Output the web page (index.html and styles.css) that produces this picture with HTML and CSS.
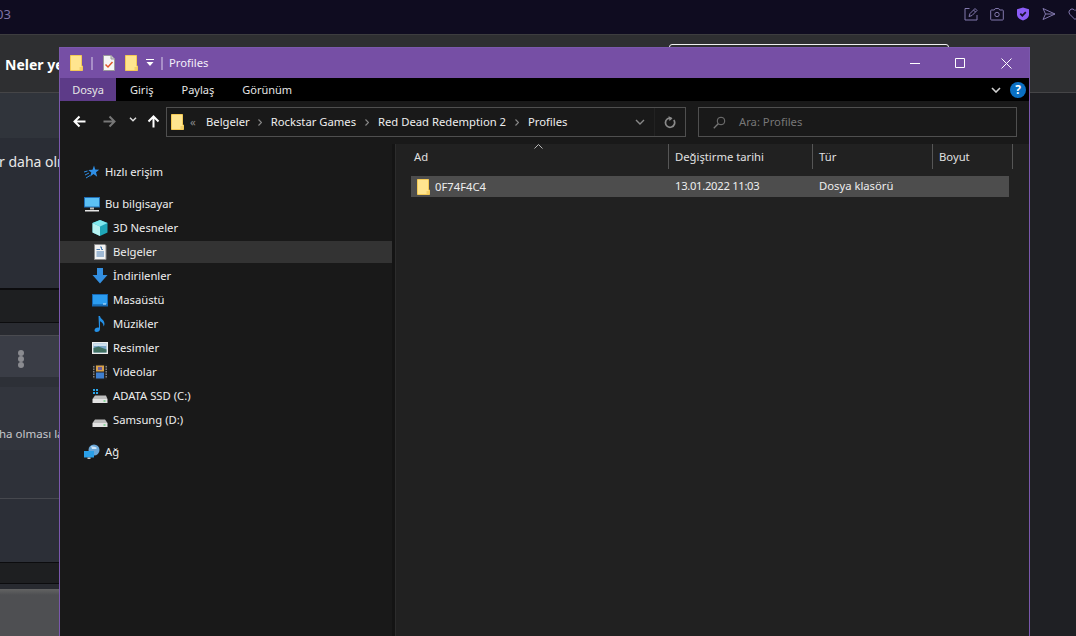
FILE: index.html
```html
<!DOCTYPE html>
<html lang="tr">
<head>
<meta charset="utf-8">
<title>Profiles</title>
<link rel="stylesheet" href="styles.css">
</head>
<body>
<svg class="defs" width="0" height="0" aria-hidden="true">
  <symbol id="folder" viewBox="0 0 13 16">
    <path d="M.5.5h11v10.500h1v4.500H.5z" fill="#ffe58f" stroke="#f4ca55"/>
    <path d="M9.500 12h2.500v3H9.500z" fill="#f4d06a"/>
  </symbol>
</svg>

<div class="site">
  <header class="topbar">
    <span class="topnum">03</span>
    <div class="topicons">
      <svg class="ti" viewBox="0 0 14 14"><path d="M5.500 1.500H1v11.500h12V8M5 9.500l1-3L11 1.500l2 2-5 5zM9.500 3l2 2" fill="none" stroke="#8278ad"/></svg>
      <svg class="ti" viewBox="0 0 14 14"><path d="M1.500 3h2.800l1-1.500h3.400l1 1.500h2.800a.8.8 0 0 1 .8.800v8.400a.8.8 0 0 1-.8.800h-11a.8.8 0 0 1-.8-.800V3.800a.8.8 0 0 1 .8-.800z" fill="none" stroke="#8278ad"/><circle cx="7" cy="7.500" r="2.200" fill="none" stroke="#8278ad"/></svg>
      <svg class="ti" viewBox="0 0 14 14"><path d="M7 .5l6 1.800v5.200c0 3-2.800 5-6 6-3.200-1-6-3-6-6V2.300z" fill="#8b5cf6"/><path d="M4.300 6.700l2 2 3.500-3.500" fill="none" stroke="#17122e" stroke-width="1.700"/></svg>
      <svg class="ti" viewBox="0 0 14 14"><path d="M1 1.500l12 5.500-12 5.500 2.500-5.500zM3.500 7H13" fill="none" stroke="#8278ad"/></svg>
      <svg class="ti" viewBox="0 0 14 14"><path d="M7 12.500L1.700 7.200a3.200 3.200 0 0 1 4.500-4.500l.8.800.8-.8a3.200 3.200 0 0 1 4.500 4.500z" fill="none" stroke="#8278ad"/></svg>
    </div>
  </header>
  <div class="pagehead">
    <strong class="pagetitle">Neler yeni</strong>
    <div class="searchfield"></div>
  </div>
  <div class="feed">
    <div class="band b1"></div>
    <div class="band b2"><span class="feedtext">r daha olması</span></div>
    <div class="band b3"></div>
    <div class="band b4"></div>
    <div class="band b5"><span class="kebab"><i></i><i></i><i></i></span></div>
    <div class="band b6"></div>
    <div class="band b7"><span class="feedtext small">ha olması lazım</span></div>
    <div class="band b8"></div>
    <div class="band b9"></div>
    <div class="band b3 b10"></div>
    <div class="band b11"></div>
    <div class="band b12"></div>
  </div>
</div>

<section class="win">
  <div class="titlebar">
    <svg class="fo"><use href="#folder"/></svg>
    <i class="qsep s1"></i>
    <svg class="qdoc" viewBox="0 0 12 16"><path d="M.5.5h7.500l3.500 3.500v11.500H.5z" fill="#f5f5f5" stroke="#9a9a9a"/><path d="M8 .5V4h3.500" fill="#ccc" stroke="#9a9a9a"/><path d="M2.500 9.500l2.500 2.500 4.500-5" fill="none" stroke="#e0562c" stroke-width="1.500"/></svg>
    <svg class="fo q3"><use href="#folder"/></svg>
    <svg class="qdrop" viewBox="0 0 8 8"><path d="M0 .5h8" stroke="#fff"/><path d="M.5 3h7L4 7z" fill="#fff"/></svg>
    <i class="qsep s2"></i>
    <span class="wintitle">Profiles</span>
    <div class="controls">
      <svg class="wc c1" viewBox="0 0 11 11"><path d="M0 5.500h10" stroke="#fff"/></svg>
      <svg class="wc c2" viewBox="0 0 11 11"><path d="M.5.5h9v9h-9z" fill="none" stroke="#fff"/></svg>
      <svg class="wc c3" viewBox="0 0 11 11"><path d="M.5.500l10 10M10.500.500l-10 10" fill="none" stroke="#fff"/></svg>
    </div>
  </div>
  <div class="ribbon">
    <span class="tab active">Dosya</span>
    <span class="tab giris">Giriş</span>
    <span class="tab paylas">Paylaş</span>
    <span class="tab gorunum">Görünüm</span>
    <svg class="collapse" viewBox="0 0 10 6"><path d="M1 1l4 4 4-4" fill="none" stroke="#d0d0d0" stroke-width="1.600"/></svg>
    <span class="help">?</span>
  </div>
  <div class="toolbar">
    <svg class="nb back" viewBox="0 0 13 13"><path d="M12.500 6.500H1.500M6.500 1.500l-5 5 5 5" fill="none" stroke="#fff" stroke-width="2"/></svg>
    <svg class="nb fwd" viewBox="0 0 13 13"><path d="M.5 6.500h11M6.500 1.500l5 5-5 5" fill="none" stroke="#777" stroke-width="2"/></svg>
    <svg class="drop" viewBox="0 0 8 5"><path d="M1 .8l3 3 3-3" fill="none" stroke="#ddd" stroke-width="1.500"/></svg>
    <svg class="nb up" viewBox="0 0 13 13"><path d="M6.500 12.500v-11M1.500 6.500l5-5 5 5" fill="none" stroke="#fff" stroke-width="2"/></svg>
    <div class="address">
      <svg class="fo"><use href="#folder"/></svg>
      <span class="more">«</span>
      <span class="crumb">Belgeler</span><svg class="gt" viewBox="0 0 4 7"><path d="M.5.5l3 3-3 3" fill="none" stroke="#888" stroke-width="1.200"/></svg>
      <span class="crumb">Rockstar Games</span><svg class="gt" viewBox="0 0 4 7"><path d="M.5.5l3 3-3 3" fill="none" stroke="#888" stroke-width="1.200"/></svg>
      <span class="crumb">Red Dead Redemption 2</span><svg class="gt" viewBox="0 0 4 7"><path d="M.5.5l3 3-3 3" fill="none" stroke="#888" stroke-width="1.200"/></svg>
      <span class="crumb">Profiles</span>
      <svg class="adrop" viewBox="0 0 10 6"><path d="M1 1l4 4 4-4" fill="none" stroke="#888" stroke-width="1.400"/></svg>
      <i class="asep"></i>
      <svg class="refresh" viewBox="0 0 12 13"><path d="M9.800 4a4.600 4.600 0 1 1-2.300-1.700" fill="none" stroke="#8a8a8a" stroke-width="1.700"/><path d="M4.500 0l4 2.400-3 2.600z" fill="#8a8a8a"/></svg>
    </div>
    <div class="search">
      <svg class="mag" viewBox="0 0 13 13"><circle cx="8" cy="5" r="3.800" fill="none" stroke="#777"/><path d="M5.200 7.800L.8 12.200" stroke="#777" stroke-width="1.300"/></svg>
      <span>Ara: Profiles</span>
    </div>
  </div>
  <div class="main">
    <nav class="nav">
      <div class="navrow head">
        <svg class="ic" viewBox="0 0 16 16"><path d="M10 1.500l1.200 4 4 .2-3.200 2.600 1.200 4.400-3.700-2.600L6 12.700l1.300-4.300L4.300 6l4.200-.2z" fill="#2f8fe6"/><path d="M1 11l4-2M2 14l4-2.500M0 8l3.500-1" stroke="#2f8fe6"/></svg>
        <span>Hızlı erişim</span>
      </div>
      <div class="navrow head gap">
        <svg class="ic" viewBox="0 0 16 16"><path d="M0 1h16v10.500H0z" fill="#1f6fb8"/><path d="M1 2h14v8.500H1z" fill="#5cc0f5"/><path d="M6 11.500h4v2H6z" fill="#bbb"/><path d="M1 14h14v1.500H1z" fill="#e4e4e4"/></svg>
        <span>Bu bilgisayar</span>
      </div>
      <div class="navrow">
        <svg class="ic" viewBox="0 0 16 16"><path d="M8 0l7.500 3v9.500L8 16 .5 12.500V3z" fill="#1fa6b8"/><path d="M8 0l7.500 3L8 6.500.5 3z" fill="#7fe8ee"/><path d="M.5 3L8 6.500V16L.5 12.500z" fill="#b6f2f2"/></svg>
        <span>3D Nesneler</span>
      </div>
      <div class="navrow sel">
        <svg class="ic" viewBox="0 0 16 16"><path d="M2.500.5H13l1 1v14H2.500z" fill="#f2f2f2" stroke="#8a8a8a"/><path d="M8 3h1.500v2.500H11M4.500 5.500H8M4.500 8h7.500M4.500 10h7.500M4.500 12h7.500" fill="none" stroke="#4a7fb5"/></svg>
        <span>Belgeler</span>
      </div>
      <div class="navrow">
        <svg class="ic" viewBox="0 0 16 16"><path d="M5 0h6v7h4.500L8 15.500.5 7H5z" fill="#338fe0"/></svg>
        <span>İndirilenler</span>
      </div>
      <div class="navrow">
        <svg class="ic" viewBox="0 0 16 16"><path d="M0 2h16v12.500H0z" fill="#1668b4"/><path d="M1 3h14v10.500H1z" fill="#2b9cf0"/><path d="M1 12.500h14v1H1z" fill="#0c4f8f"/><path d="M11 11.500h3v1h-3z" fill="#cfeaff"/></svg>
        <span>Masaüstü</span>
      </div>
      <div class="navrow">
        <svg class="ic" viewBox="0 0 16 16"><path d="M6.500 0H8c.3 3 4.500 3.500 4.500 8 0 1-.4 1.800-1 2.500.3-3-2-4.500-3.500-5.300V13c0 1.800-1.500 3-3.500 3-1.300 0-2-.7-2-1.700 0-1.500 1.500-2.800 3.500-2.800.5 0 .8 0 1 .2z" fill="#2490e6"/></svg>
        <span>Müzikler</span>
      </div>
      <div class="navrow">
        <svg class="ic" viewBox="0 0 16 16"><path d="M0 2h16v12H0z" fill="#eee"/><path d="M1.500 3.500h13v9h-13z" fill="#7ba7c9"/><path d="M1.500 8l5-1.500 8 3v3h-13z" fill="#3f6f60"/><path d="M1.500 3.500h13V6h-13z" fill="#cfe0ee"/></svg>
        <span>Resimler</span>
      </div>
      <div class="navrow">
        <svg class="ic" viewBox="0 0 16 16"><path d="M1 .5h14v15H1z" fill="#222"/><path d="M4 1.500h8v6H4z" fill="#d9a24a"/><path d="M4 8.500h8v6H4z" fill="#3f7fd0"/><path d="M1.800 2v12M14.200 2v12" stroke="#999" stroke-width="1.200" stroke-dasharray="1.500 1"/><path d="M6 3h4v3H6z" fill="#6c5f9a"/></svg>
        <span>Videolar</span>
      </div>
      <div class="navrow">
        <svg class="ic" viewBox="0 0 16 16"><path d="M1 1h2v2H1zM4 1h2v2H4zM1 4h2v2H1zM4 4h2v2H4z" fill="#2aa4e8"/><path d="M3 7.500h11L15.500 11H.500z" fill="#bcbcbc"/><path d="M.5 11h15v4H.5z" fill="#e2e2e2"/><path d="M11.500 12.500h2v1h-2z" fill="#35c759"/></svg>
        <span>ADATA SSD (C:)</span>
      </div>
      <div class="navrow">
        <svg class="ic" viewBox="0 0 16 16"><path d="M3 7.500h10L15.500 11H.500z" fill="#bcbcbc"/><path d="M.5 11h15v4H.5z" fill="#e2e2e2"/><path d="M11.500 12.500h2v1h-2z" fill="#35c759"/></svg>
        <span>Samsung (D:)</span>
      </div>
      <div class="navrow head gap">
        <svg class="ic" viewBox="0 0 16 16"><circle cx="10" cy="6" r="5.500" fill="#6aa7d8"/><path d="M7 2c2 1 5 .5 6 2-1 1.500-3 1-5 1z" fill="#cfe6f7"/><path d="M0 7h10v6.500H0z" fill="#2a9fe8"/><path d="M3.500 13.500h3V15h-3z" fill="#c8c8c8"/></svg>
        <span>Ağ</span>
      </div>
    </nav>
    <div class="gutter"></div>
    <div class="content">
      <div class="colhead">
        <svg class="caret" viewBox="0 0 9 5"><path d="M.5 4.500l4-4 4 4" fill="none" stroke="#b8b8b8"/></svg>
        <span class="hc">Ad</span>
        <span class="hc">Değiştirme tarihi</span>
        <span class="hc">Tür</span>
        <span class="hc">Boyut</span>
      </div>
      <div class="filerow">
        <span class="cell name"><svg class="fo"><use href="#folder"/></svg>0F74F4C4</span>
        <span class="cell date">13.01.2022 11:03</span>
        <span class="cell">Dosya klasörü</span>
        <span class="cell"></span>
      </div>
    </div>
  </div>
</section>
</body>
</html>
```
FILE: styles.css
```css
* { box-sizing: border-box; }
html, body { margin: 0; height: 100%; overflow: hidden; background: #1f2024; }
body { font-family: "Noto Sans", "Open Sans", sans-serif; font-size: 11.25px; color: #eee; }
.defs { position: absolute; }
i { display: block; font-style: normal; }
svg { display: block; flex: none; }

/* page behind the window */
.site { height: 636px; display: flex; flex-direction: column; }
.topbar { height: 34px; background: #0f0c20; display: flex; align-items: center; justify-content: space-between; color: #7f74a8; flex: none; padding-bottom: 6px; }
.topnum { margin-left: -4px; font-size: 13px; }
.topicons { display: flex; gap: 12px; margin-right: -6px; align-items: center; }
.ti { width: 14px; height: 14px; }
.pagehead { height: 59px; flex: none; background: #2e2f31; border-top: 1px solid #3d3d3f; border-bottom: 1px solid #454547; display: flex; align-items: flex-start; }
.pagetitle { font-size: 14px; color: #fff; margin: 20px 0 0 5px; width: 664px; font-weight: 700; }
.searchfield { width: 280px; height: 30px; margin-top: 9px; border: 1px solid #f0f0f0; border-radius: 3px; }
.feed { width: 400px; flex: 1; display: flex; flex-direction: column; }
.band { flex: none; display: flex; align-items: center; overflow: hidden; white-space: nowrap; }
.b1 { height: 45px; background: #30343b; }
.b2 { height: 152px; background: #2a2d35; border-bottom: 2px solid #0c0c0e; align-items: flex-start; }
.b3 { height: 33px; background: #1e1f21; border-bottom: 1px solid #0c0c0e; }
.b4 { height: 13px; background: #292b31; border-bottom: 1px solid #4a4b50; }
.b5 { height: 41px; background: #3a3d46; }
.b6 { height: 10px; background: #2d3037; }
.b7 { height: 63px; background: #32353d; align-items: flex-start; }
.b8 { height: 49px; background: #2e3139; border-bottom: 1px solid #46484e; }
.b9 { height: 64px; background: #2c2f37; border-bottom: 1px solid #0c0c0e; }
.b10 { height: 21px; }
.b11 { height: 5px; background: #282a30; }
.b12 { flex: 1; background: linear-gradient(#636363, #4e4f52 6px); }
.feedtext { font-size: 14px; color: #e8e8e8; margin: 14px 0 0 -1px; }
.feedtext.small { font-size: 11.5px; color: #c8c8cc; margin: 39px 0 0 -1px; }
.kebab { display: flex; flex-direction: column; margin: 4px 0 0 18px; }
.kebab i { width: 6px; height: 6px; border-radius: 50%; background: #8a8b90; }

/* explorer window */
.win { position: absolute; left: 59px; top: 47px; width: 971px; height: 589px; background: #191919; border: 1px solid #7b58ad; border-bottom: 0; display: flex; flex-direction: column; }
.titlebar { height: 30px; flex: none; background: #764fa5; display: flex; align-items: center; padding-left: 10px; }
.fo { width: 13px; height: 16px; }
.qsep { width: 2px; height: 13px; background: #a78fc8; }
.s1 { margin-left: 8px; }
.qdoc { width: 12px; height: 16px; margin-left: 10px; }
.q3 { margin-left: 10px; }
.qdrop { width: 8px; height: 8px; margin-left: 8px; }
.s2 { margin-left: 7px; }
.wintitle { margin: 0 0 2px 6px; color: #f4f0fa; }
.controls { margin-left: auto; display: flex; align-items: center; padding-right: 17px; }
.wc { width: 11px; height: 11px; }
.c2 { margin-left: 34px; }
.c3 { margin-left: 35px; }
.ribbon { height: 23px; flex: none; background: #000; display: flex; align-items: center; }
.tab { color: #e6e6e6; font-size: 11px; }
.tab.active { width: 56px; height: 23px; background: #5d3b88; display: flex; align-items: center; justify-content: center; }
.giris { margin-left: 14px; }
.paylas { margin-left: 28px; }
.gorunum { margin-left: 28px; }
.collapse { width: 10px; height: 6px; margin-left: auto; }
.help { width: 16px; height: 16px; border-radius: 50%; background: #0a6fc2; color: #fff; font-weight: 700; font-size: 12px; line-height: 16px; text-align: center; margin: 0 3px 0 9px; }
.toolbar { height: 43px; flex: none; background: #191919; display: flex; align-items: flex-start; padding: 6px 0 0 13px; }
.nb { width: 13px; height: 13px; margin-top: 8px; }
.fwd { margin-left: 17px; }
.drop { width: 8px; height: 5px; margin: 10px 0 0 13px; }
.up { margin-left: 10px; }
.address { width: 520px; height: 30px; margin-left: 6px; border: 1px solid #4f4f4f; display: flex; align-items: center; padding-left: 4px; color: #eee; }
.more { color: #888; margin: 0 0 2px 6px; width: 16px; }
.crumb { margin-bottom: 2px; }
.gt { width: 4px; height: 7px; margin: 0 9px; }
.more + .crumb + .gt { margin-left: 8px; }
.adrop { width: 10px; height: 6px; margin-left: auto; }
.asep { width: 1px; height: 28px; background: #222; margin-left: 9px; }
.refresh { width: 12px; height: 13px; margin: 0 9px 0 9px; }
.search { width: 319px; height: 30px; margin-left: 12px; border: 1px solid #4f4f4f; display: flex; align-items: center; padding-left: 14px; color: #777; }
.search span { margin-bottom: 2px; }
.mag { width: 13px; height: 13px; margin-right: 13px; }
.main { flex: 1; display: flex; min-height: 0; }
.nav { width: 332px; flex: none; padding-top: 17px; display: flex; flex-direction: column; gap: 2px; }
.navrow { height: 22px; display: flex; align-items: center; padding-left: 32px; flex: none; }
.navrow span { margin-bottom: 2px; }
.navrow.head { padding-left: 24px; }
.navrow.gap { margin-top: 8px; }
.navrow.sel { background: #333; }
.ic { width: 16px; height: 16px; margin-right: 5px; }
.gutter { width: 4px; flex: none; background: #141414; border-right: 1px solid #2c2c2c; }
.content { flex: 1; background: #212121; padding-left: 15px; }
.colhead { position: relative; display: grid; grid-template-columns: 258px 144px 120px 80px; height: 25px; width: 602px; }
.caret { position: absolute; left: 123px; top: 0; width: 9px; height: 5px; }
.hc { border-right: 1px solid #565656; padding: 5px 0 0 3px; color: #e0e0e0; }
.hc + .hc { padding-left: 6px; }
.filerow { display: grid; grid-template-columns: 258px 144px 120px 76px; width: 598px; height: 21px; margin-top: 7px; background: #4d4d4d; align-items: center; }
.cell { padding: 0 0 2px 6px; color: #eee; }
.cell.date { letter-spacing: -.3px; }
.cell.name { display: flex; align-items: center; gap: 5px; padding-bottom: 0; }
```
